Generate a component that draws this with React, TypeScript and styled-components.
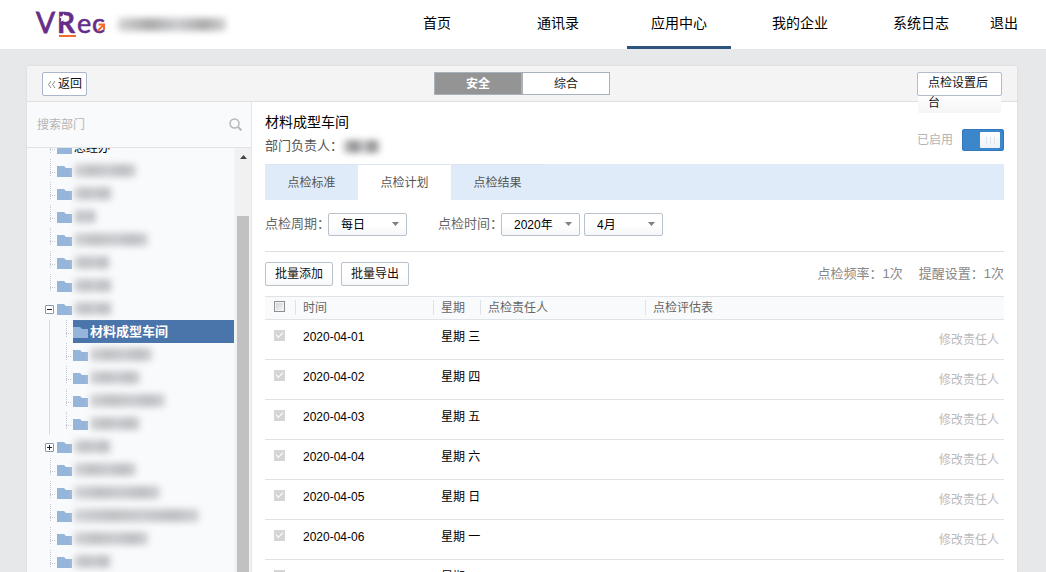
import React from "react";
import styled, { createGlobalStyle, css } from "styled-components";

const GlobalStyle = createGlobalStyle`
  *, *::before, *::after { box-sizing: border-box; }
  html, body, #root { height: 100%; }
  body {
    margin: 0;
    overflow: hidden;
    background: #e7e8ea;
    color: #000;
    font-family: "Liberation Sans", "Noto Sans CJK SC", sans-serif;
    font-size: 12px;
    line-height: 20px;
  }
  button, input, select { font: inherit; color: inherit; margin: 0; }
`;

const Page = styled.div`
  display: flex;
  flex-direction: column;
  height: 100%;
`;

const Header = styled.header`
  display: flex;
  flex: none;
  align-items: center;
  height: 49px;
  padding: 0 28px 0 35px;
  background: #fff;
`;

const Logo = styled.svg`
  display: block;
  flex: none;
  width: 71px;
  height: 30px;
  overflow: visible;
`;

const Redacted = styled.span<{ $width: number; $tone?: string }>`
  display: block;
  flex: none;
  width: ${(p) => p.$width}px;
  height: 13px;
  border-radius: 3px;
  background: linear-gradient(
    90deg,
    #d2d3d6,
    ${(p) => p.$tone ?? "#c0c1c4"} 30%,
    #cbccd0 55%,
    ${(p) => p.$tone ?? "#bdbec2"} 80%,
    #d2d3d6
  );
  filter: blur(3px);
`;

const Company = styled.div`
  margin-left: 12px;
`;

const Nav = styled.nav`
  display: flex;
  gap: 17px;
  height: 100%;
  margin-left: auto;
  font-size: 14px;
`;

const NavLink = styled.a<{ $active?: boolean; $narrow?: boolean }>`
  width: ${(p) => (p.$narrow ? 28 : 104)}px;
  padding-top: 3px;
  border-bottom: 3px solid ${(p) => (p.$active ? "#2f5482" : "transparent")};
  color: #000;
  line-height: 40px;
  text-align: center;
  text-decoration: none;
  white-space: nowrap;
`;

const Card = styled.div`
  display: flex;
  flex: 1;
  flex-direction: column;
  min-height: 0;
  margin: 17px 29px 0 27px;
  background: #fff;
  box-shadow: 0 0 2px #cfd2d6;
`;

const Toolbar = styled.div`
  display: grid;
  flex: none;
  grid-template-columns: 1fr auto 1fr;
  align-items: start;
  height: 36px;
  padding: 6px 15px 0;
  border-bottom: 1px solid #dddfe3;
  background: #f4f4f4;
`;

const Button = styled.button`
  height: 24px;
  padding: 0 9px;
  border: 1px solid #b9c2cc;
  border-radius: 2px;
  background: linear-gradient(#fff 50%, #f7f8f9);
  color: #111;
  line-height: 20px;
  white-space: nowrap;
`;

const BackButton = styled(Button)`
  display: flex;
  align-items: center;
  justify-self: start;
  gap: 2px;
  padding: 0 4px;
  border-color: #a9b6cc;
  background: #fff;
`;

const SettingsButton = styled(Button)`
  position: relative;
  display: flex;
  align-items: flex-start;
  justify-self: end;
  width: 85px;
  padding: 0;
  border-color: transparent;
  background: none;

  &::after {
    position: absolute;
    inset: -1px;
    border: 1px solid #b3bccb;
    border-radius: 2px;
    content: "";
  }
`;

const SettingsLabel = styled.span`
  display: block;
  flex: 1;
  height: 40px;
  padding: 0 10px;
  background: linear-gradient(#fff 50%, #f5f5f5);
  text-align: left;
  white-space: normal;
`;

const Segments = styled.div`
  display: flex;
`;

const Segment = styled.button<{ $active?: boolean }>`
  width: 88px;
  height: 23px;
  padding: 0;
  border: 1px solid #a9b1bb;
  background: ${(p) => (p.$active ? "#949494" : "#fff")};
  color: ${(p) => (p.$active ? "#fff" : "#222")};
  font-weight: ${(p) => (p.$active ? 700 : 400)};
`;

const Body = styled.div`
  display: flex;
  flex: 1;
  min-height: 0;
`;

const Sidebar = styled.aside`
  display: flex;
  flex: none;
  flex-direction: column;
  width: 225px;
  border-right: 1px solid #e2e5e9;
  background: #f9fafc;
`;

const SearchBar = styled.label`
  display: flex;
  flex: none;
  align-items: center;
  height: 46px;
  padding: 0 9px 0 10px;
  border-bottom: 1px solid #dfe3e8;
`;

const SearchInput = styled.input`
  flex: 1;
  min-width: 0;
  padding: 0;
  border: 0;
  outline: 0;
  background: transparent;

  &::placeholder { color: #b5b5b5; opacity: 1; }
`;

const TreePane = styled.div`
  display: flex;
  flex: 1;
  min-height: 0;
  overflow: hidden;
`;

const Tree = styled.ul`
  flex: 1;
  min-width: 0;
  margin: -12px 0 0;
  padding: 0;
  list-style: none;
`;

const TreeRow = styled.li`
  display: flex;
  align-items: stretch;
  height: 23px;
  padding-left: 18px;
`;

const Guide = styled.span<{ $solid?: boolean; $branch?: boolean }>`
  display: flex;
  flex: none;
  align-items: center;
  width: 12px;
  margin-right: ${(p) => (p.$solid ? 4 : 0)}px;
  background:
    ${(p) =>
      p.$branch
        ? "repeating-linear-gradient(90deg, #c5c9ce 0 1px, transparent 1px 2px) 5px 13px / 6px 1px no-repeat,"
        : ""}
    ${(p) =>
      p.$solid
        ? "linear-gradient(#d9dce0, #d9dce0) 4px 0 / 1px 100% no-repeat"
        : "repeating-linear-gradient(#c5c9ce 0 1px, transparent 1px 2px) 5px 0 / 1px 18px no-repeat"};
`;

const ToggleCell = styled.span`
  display: flex;
  flex: none;
  align-items: center;
  width: 12px;
`;

const Expander = styled.button`
  display: flex;
  width: 9px;
  height: 9px;
  margin-top: 2px;
  padding: 0;
  border: 1px solid #8798a8;
  border-radius: 1px;
  background: #fff;

  svg { display: block; width: 7px; height: 7px; }
`;

const TreeLabel = styled.div<{ $selected?: boolean }>`
  display: flex;
  flex: 1;
  align-items: center;
  gap: 2px;
  ${(p) =>
    p.$selected &&
    css`
      background: #4a75ab;
      color: #fff;
      font-size: 13px;
      font-weight: 700;
    `}
`;

const FolderSvg = styled.svg`
  flex: none;
  width: 15px;
  height: 12px;
`;

const Scrollbar = styled.div`
  display: flex;
  flex: none;
  flex-direction: column;
  align-items: center;
  width: 17px;
  background: #f1f1f1;
  border-left: 1px solid #f4f5f6;
`;

const ScrollArrow = styled.svg`
  flex: none;
  width: 7px;
  height: 4px;
  margin: 7px 0 57px;
`;

const ScrollThumb = styled.div`
  flex: 1;
  width: 12px;
  background: #c1c1c1;
`;

const Main = styled.main`
  flex: 1;
  min-width: 0;
  overflow: hidden;
  padding: 9px 13px 0;
`;

const Heading = styled.div`
  display: flex;
  justify-content: space-between;
  height: 53px;
`;

const Title = styled.h1`
  margin: 0;
  font-size: 14px;
  font-weight: 400;
  line-height: 23px;
`;

const Owner = styled.div`
  display: flex;
  align-items: center;
  color: #555;
  font-size: 13px;
  line-height: 24px;
`;

const EnableLabel = styled.label`
  display: flex;
  align-items: center;
  gap: 9px;
  height: 21px;
  margin-top: 18px;
  color: #b3b3b3;
`;

const Switch = styled.input`
  width: 42px;
  height: 22px;
  padding: 2px 3px;
  appearance: none;
  border: 1px solid #3278bd;
  border-radius: 2px;
  background: #3c87cc;

  &::before {
    display: block;
    width: 20px;
    height: 16px;
    margin-left: auto;
    border-radius: 1px;
    background:
      repeating-linear-gradient(90deg, #dfe3ea 0 1px, transparent 1px 4px) 6px 5px / 9px 7px no-repeat,
      linear-gradient(#fff, #eff2f8);
    content: "";
  }
`;

const Tabs = styled.div`
  display: flex;
  height: 36px;
  background: #e0ebf9;
`;

const Tab = styled.button<{ $active?: boolean }>`
  width: 93px;
  padding: 0;
  border: 0;
  border-top: 1px solid #dce6f3;
  background: ${(p) => (p.$active ? "#fff" : "transparent")};
  color: #555;
`;

const Filters = styled.div`
  display: flex;
  align-items: center;
  height: 52px;
  border-bottom: 1px solid #dddfe2;
  color: #666;
  font-size: 13px;
`;

const FilterLabel = styled.label`
  width: 63px;
  margin-bottom: 4px;
  white-space: nowrap;
`;

const SelectBox = styled.span<{ $gap?: number }>`
  position: relative;
  display: flex;
  margin: 0 ${(p) => p.$gap ?? 0}px 2px 0;

  svg {
    position: absolute;
    top: 9px;
    right: 8px;
    width: 7px;
    height: 4px;
    pointer-events: none;
  }
`;

const Select = styled.select`
  width: 79px;
  height: 23px;
  padding: 0 0 0 12px;
  appearance: none;
  border: 1px solid #b9c2cc;
  border-radius: 2px;
  background: linear-gradient(#fff 50%, #f5f6f8);
  color: #000;
  font-size: 12px;
`;

const Actions = styled.div`
  display: flex;
  gap: 8px;
  padding: 10px 0;
`;

const Summary = styled.div`
  display: flex;
  gap: 16px;
  margin-left: auto;
  color: #888;
  font-size: 13px;
  line-height: 24px;
`;

const Table = styled.table`
  width: 100%;
  border-collapse: separate;
  border-spacing: 0;
  table-layout: fixed;
`;

const HeadCell = styled.th<{ $divided?: boolean }>`
  height: 24px;
  padding: 0 0 0 8px;
  border: solid #dfe2e7;
  border-width: 1px 0;
  background:
    ${(p) =>
      p.$divided
        ? "linear-gradient(#dfe3e8, #dfe3e8) 0 3px / 1px 15px no-repeat,"
        : ""}
    #f9fafc;
  color: #666;
  font-weight: 400;
  line-height: 20px;
  text-align: left;
`;

const Cell = styled.td`
  height: 40px;
  padding: 0 0 5px 8px;
  border-bottom: 1px solid #e2e2e2;
  line-height: 20px;
  white-space: nowrap;
`;

const ActionCell = styled(Cell)`
  padding: 0 5px 0 0;
  text-align: right;
`;

const EditButton = styled.button`
  padding: 0;
  border: 0;
  background: none;

  &:disabled { color: #bbb; }
`;

const Check = styled.input`
  display: block;
  width: 11px;
  height: 11px;
  margin: 0 0 4px 1px;
  appearance: none;
  border: 1px solid #8e8f8f;
  background: linear-gradient(135deg, #c9cdd3, #fafafa);
  box-shadow: inset 0 0 0 1px #f4f4f4;

  &:disabled {
    border-color: #d5d5d5;
    background: #d5d5d5;
    box-shadow: none;
  }

  &:checked::after {
    display: block;
    width: 7px;
    height: 4px;
    margin: 1px;
    border: solid #fff;
    border-width: 0 0 1px 1px;
    transform: rotate(-45deg);
    content: "";
  }
`;

const Folder = () => (
  <FolderSvg viewBox="0 0 15 12" aria-hidden="true">
    <path d="M0 1h7l2 2h6v9H0z" fill="#96b5da" />
  </FolderSvg>
);

const Caret = () => (
  <svg viewBox="0 0 7 4" aria-hidden="true">
    <path d="M0 0h7L3.500 4z" fill="#808080" />
  </svg>
);

type Node = { width: number; nested?: boolean; toggle?: "open" | "closed"; label?: string; selected?: boolean };

const nodes: Node[] = [
  { width: 0, label: "总经办" },
  { width: 62 },
  { width: 38 },
  { width: 22 },
  { width: 74 },
  { width: 36 },
  { width: 38 },
  { width: 38, toggle: "open" },
  { width: 0, nested: true, label: "材料成型车间", selected: true },
  { width: 62, nested: true },
  { width: 50, nested: true },
  { width: 75, nested: true },
  { width: 50, nested: true },
  { width: 37, toggle: "closed" },
  { width: 62 },
  { width: 86 },
  { width: 125 },
  { width: 74 },
  { width: 37 },
];

const navItems = ["首页", "通讯录", "应用中心", "我的企业", "系统日志", "退出"];

const days = [
  ["2020-04-01", "三"],
  ["2020-04-02", "四"],
  ["2020-04-03", "五"],
  ["2020-04-04", "六"],
  ["2020-04-05", "日"],
  ["2020-04-06", "一"],
  ["2020-04-07", "二"],
];

function TreeNode({ node }: { node: Node }) {
  return (
    <TreeRow>
      {node.nested && <Guide $solid />}
      {node.toggle ? (
        <ToggleCell>
          <Expander aria-label={node.toggle === "open" ? "收起" : "展开"}>
            <svg viewBox="0 0 7 7" aria-hidden="true">
              <path d={node.toggle === "open" ? "M1 3h5v1H1z" : "M1 3h5v1H1zM3 1h1v5H3z"} fill="#222" />
            </svg>
          </Expander>
        </ToggleCell>
      ) : (
        <Guide $branch />
      )}
      <TreeLabel $selected={node.selected}>
        <Folder />
        {node.label ?? <Redacted $width={node.width} />}
      </TreeLabel>
    </TreeRow>
  );
}

export default function App() {
  return (
    <Page>
      <GlobalStyle />
      <Header>
        <Logo viewBox="0 0 71 30" role="img" aria-label="VRec">
          <g fill="#662d88" stroke="#662d88" fontFamily="Lato, sans-serif">
            <text x="1" y="23" fontSize="28" strokeWidth="0.800">V</text>
            <text x="22" y="23" fontSize="28" fontWeight="700" strokeWidth="0.500">R</text>
            <text x="42" y="23" fontSize="27" strokeWidth="0.600">e</text>
            <text x="57" y="23" fontSize="27" strokeWidth="0.600">c</text>
          </g>
          <path d="M28.500 3.500l1.300 2.800 3 .4-2.200 2.100.6 3-2.700-1.500-2.700 1.500.6-3-2.200-2.100 3-.4z" fill="#fff" />
          <path d="M24 26h17" stroke="#f26b2d" strokeWidth="2" />
          <path d="M62.500 21l6-6M63.500 14.500H69V20" fill="none" stroke="#f26b2d" strokeWidth="2" />
        </Logo>
        <Company>
          <Redacted $width={108} $tone="#aaa" />
        </Company>
        <Nav>
          {navItems.map((item) => (
            <NavLink key={item} href="#" $active={item === "应用中心"} $narrow={item === "退出"}>
              {item}
            </NavLink>
          ))}
        </Nav>
      </Header>

      <Card>
        <Toolbar>
          <BackButton>
            <svg width="9" height="9" viewBox="0 0 9 9" fill="none" stroke="#888" aria-hidden="true">
              <path d="M4 1L1.500 4.500 4 8M8 1L5.500 4.500 8 8" />
            </svg>
            返回
          </BackButton>
          <Segments>
            <Segment $active>安全</Segment>
            <Segment>综合</Segment>
          </Segments>
          <SettingsButton>
            <SettingsLabel>点检设置后台</SettingsLabel>
          </SettingsButton>
        </Toolbar>

        <Body>
          <Sidebar>
            <SearchBar>
              <SearchInput type="text" placeholder="搜索部门" aria-label="搜索部门" />
              <svg width="13" height="13" viewBox="0 0 13 13" fill="none" stroke="#b8b8b8" strokeWidth="1.500" aria-hidden="true">
                <circle cx="5.500" cy="5.500" r="4.500" />
                <path d="M9 9l3.500 3.500" strokeWidth="2" />
              </svg>
            </SearchBar>
            <TreePane>
              <Tree>
                {nodes.map((node, i) => (
                  <TreeNode key={i} node={node} />
                ))}
              </Tree>
              <Scrollbar>
                <ScrollArrow viewBox="0 0 7 4" aria-hidden="true">
                  <path d="M0 4h7L3.500 0z" fill="#444" />
                </ScrollArrow>
                <ScrollThumb />
              </Scrollbar>
            </TreePane>
          </Sidebar>

          <Main>
            <Heading>
              <div>
                <Title>材料成型车间</Title>
                <Owner>
                  部门负责人：
                  <Redacted $width={37} $tone="#8a8a8a" />
                </Owner>
              </div>
              <EnableLabel>
                已启用
                <Switch type="checkbox" role="switch" defaultChecked />
              </EnableLabel>
            </Heading>

            <Tabs role="tablist">
              <Tab role="tab">点检标准</Tab>
              <Tab role="tab" aria-selected="true" $active>点检计划</Tab>
              <Tab role="tab">点检结果</Tab>
            </Tabs>

            <Filters>
              <FilterLabel htmlFor="period">点检周期：</FilterLabel>
              <SelectBox $gap={31}>
                <Select id="period"><option>每日</option></Select>
                <Caret />
              </SelectBox>
              <FilterLabel htmlFor="year">点检时间：</FilterLabel>
              <SelectBox $gap={4}>
                <Select id="year"><option>2020年</option></Select>
                <Caret />
              </SelectBox>
              <SelectBox>
                <Select aria-label="月份"><option>4月</option></Select>
                <Caret />
              </SelectBox>
            </Filters>

            <Actions>
              <Button>批量添加</Button>
              <Button>批量导出</Button>
              <Summary>
                <span>点检频率：1次</span>
                <span>提醒设置：1次</span>
              </Summary>
            </Actions>

            <Table>
              <colgroup>
                <col width="30" />
                <col width="138" />
                <col width="47" />
                <col width="165" />
                <col />
              </colgroup>
              <thead>
                <tr>
                  <HeadCell><Check type="checkbox" aria-label="全选" /></HeadCell>
                  <HeadCell $divided>时间</HeadCell>
                  <HeadCell $divided>星期</HeadCell>
                  <HeadCell $divided>点检责任人</HeadCell>
                  <HeadCell $divided>点检评估表</HeadCell>
                </tr>
              </thead>
              <tbody>
                {days.map(([date, day]) => (
                  <tr key={date}>
                    <Cell><Check type="checkbox" aria-label={date} defaultChecked disabled /></Cell>
                    <Cell>{date}</Cell>
                    <Cell>星期 {day}</Cell>
                    <Cell />
                    <ActionCell><EditButton disabled>修改责任人</EditButton></ActionCell>
                  </tr>
                ))}
              </tbody>
            </Table>
          </Main>
        </Body>
      </Card>
    </Page>
  );
}
